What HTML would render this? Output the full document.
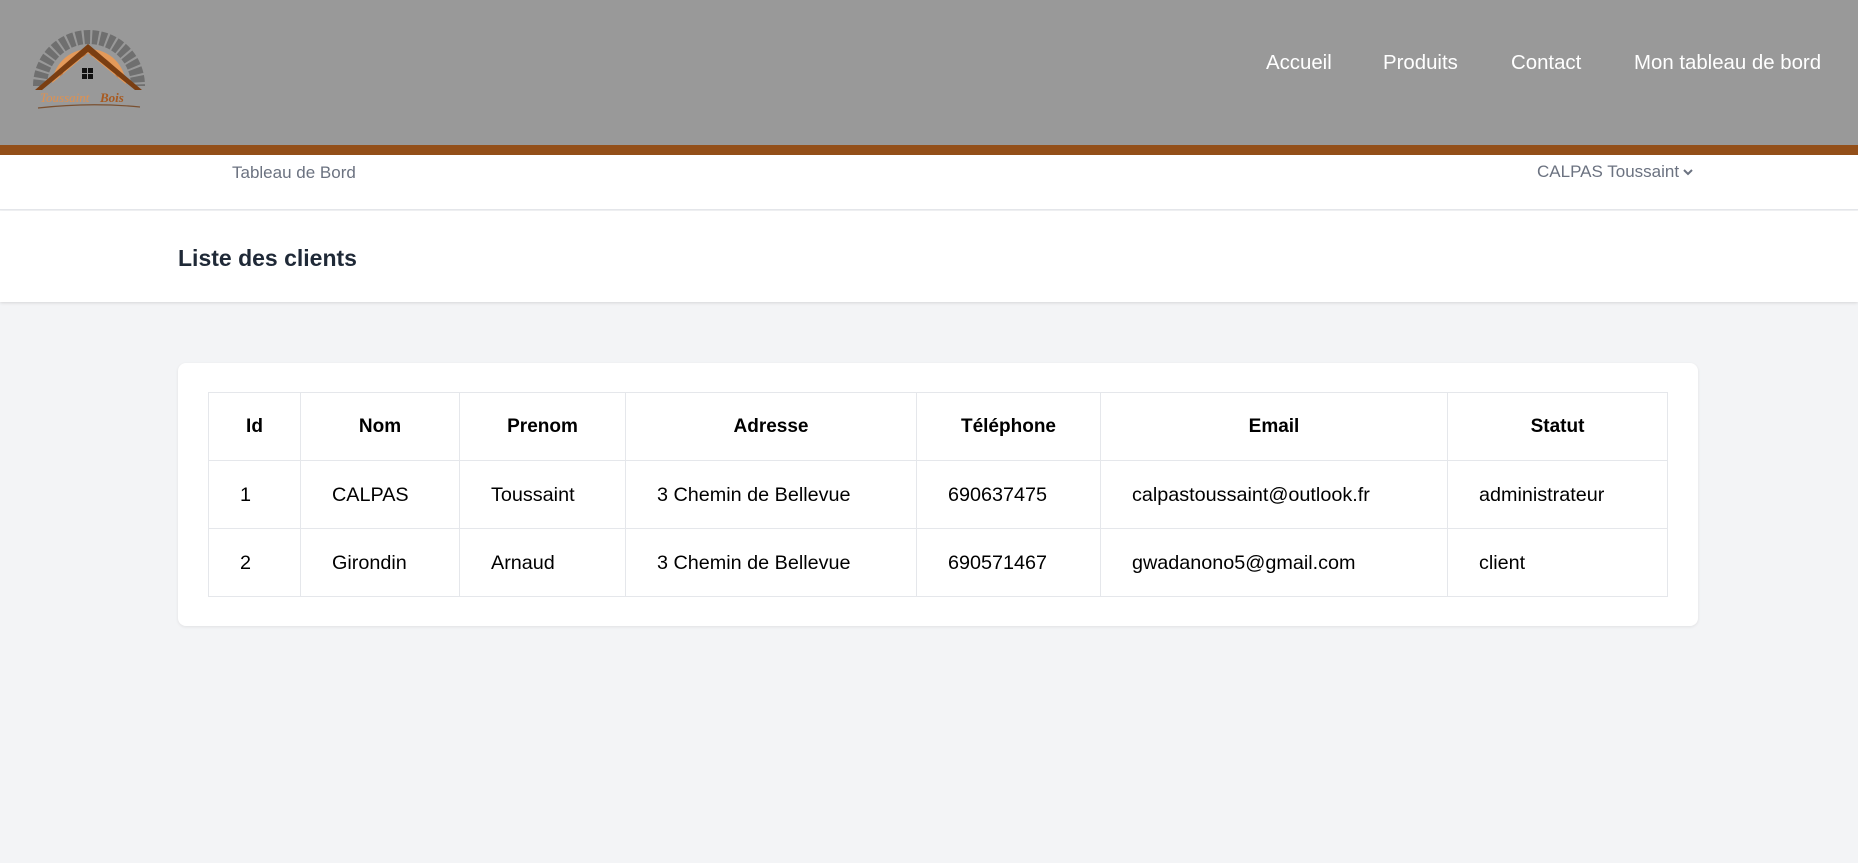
<!DOCTYPE html>
<html><head><meta charset="utf-8"><style>
*{margin:0;padding:0;box-sizing:border-box}
body{width:1858px;height:863px;background:#f3f4f6;font-family:"Liberation Sans",sans-serif;position:relative;overflow:hidden}
.top{position:absolute;left:0;top:0;width:1858px;height:145px;background:#999}
.bar{position:absolute;left:0;top:145px;width:1858px;height:10px;background:#934f19}
.nav a{position:absolute;top:52px;color:#fff;font-size:20.4px;text-decoration:none}
.sub{position:absolute;left:0;top:155px;width:1858px;height:55px;background:#fff;border-bottom:1px solid #e5e7eb}
.hdr{position:absolute;left:0;top:211px;width:1858px;height:91px;background:#fff;box-shadow:0 1px 3px rgba(0,0,0,.12)}
.card{position:absolute;left:178px;top:363px;width:1520px;height:263px;background:#fff;border-radius:8px;box-shadow:0 1px 3px rgba(0,0,0,.08)}
table{position:absolute;left:30px;top:29px;border-collapse:collapse;font-size:19.8px;color:#000}
td,th{border:1px solid #e5e7eb;height:68px;padding:2px 0 0 31px;text-align:left}
th{text-align:center;padding:0;font-weight:bold;font-size:19px}
</style></head><body>
<div class="top">
<svg style="position:absolute;left:30px;top:18px" width="118" height="95" viewBox="0 0 118 95">
<path d="M10 68 A49 49 0 0 1 108 68" fill="none" stroke="#6f6f6f" stroke-width="14" stroke-dasharray="6 2"/>
<path d="M22 68 A37 37 0 0 1 96 68 Z" fill="#e49a5a"/>
<path d="M30 66 A29 29 0 0 1 88 66" fill="none" stroke="#c9783a" stroke-width="2"/>
<path d="M40 64 A19 19 0 0 1 78 64" fill="none" stroke="#c9783a" stroke-width="2"/>
<path d="M5 72 L58 26 L112 72 L105 72 L58 34 L12 72Z" fill="#7a3e12"/>
<path d="M14 72 L58 35 L103 72Z" fill="#999"/>
<rect x="52" y="50" width="5" height="5" fill="#111"/><rect x="58" y="50" width="5" height="5" fill="#111"/>
<rect x="52" y="56" width="5" height="5" fill="#111"/><rect x="58" y="56" width="5" height="5" fill="#111"/>
<text x="10" y="84" font-family="Liberation Serif,serif" font-style="italic" font-size="13" fill="#e0914f">Toussaint</text>
<text x="70" y="84" font-family="Liberation Serif,serif" font-style="italic" font-weight="bold" font-size="13" fill="#a85a20">Bois</text>
<path d="M8 90 Q60 84 110 89" fill="none" stroke="#7a5030" stroke-width="1.2"/>
</svg>
<div class="nav"><a style="left:1266px">Accueil</a><a style="left:1383px">Produits</a><a style="left:1511px">Contact</a><a style="left:1634px">Mon tableau de bord</a></div>
</div>
<div class="bar"></div>
<div class="sub">
<div style="position:absolute;left:232px;top:8px;font-size:17px;color:#6b7280">Tableau de Bord</div>
<div style="position:absolute;left:1537px;top:7px;font-size:17px;color:#6b7280">CALPAS Toussaint</div>
<svg style="position:absolute;left:1682px;top:11px" width="12" height="12" viewBox="0 0 12 12"><path d="M2 4 L6 8 L10 4" fill="none" stroke="#6b7280" stroke-width="2"/></svg>
</div>
<div class="hdr"><div style="position:absolute;left:178px;top:34px;font-size:23px;font-weight:bold;color:#1f2937">Liste des clients</div></div>
<div class="card"><table>
<tr><th style="width:92px">Id</th><th style="width:159px">Nom</th><th style="width:166px">Prenom</th><th style="width:291px">Adresse</th><th style="width:184px">Téléphone</th><th style="width:347px">Email</th><th style="width:220px">Statut</th></tr>
<tr><td>1</td><td>CALPAS</td><td>Toussaint</td><td>3 Chemin de Bellevue</td><td>690637475</td><td>calpastoussaint@outlook.fr</td><td>administrateur</td></tr>
<tr><td>2</td><td>Girondin</td><td>Arnaud</td><td>3 Chemin de Bellevue</td><td>690571467</td><td>gwadanono5@gmail.com</td><td>client</td></tr>
</table></div>
</body></html>
